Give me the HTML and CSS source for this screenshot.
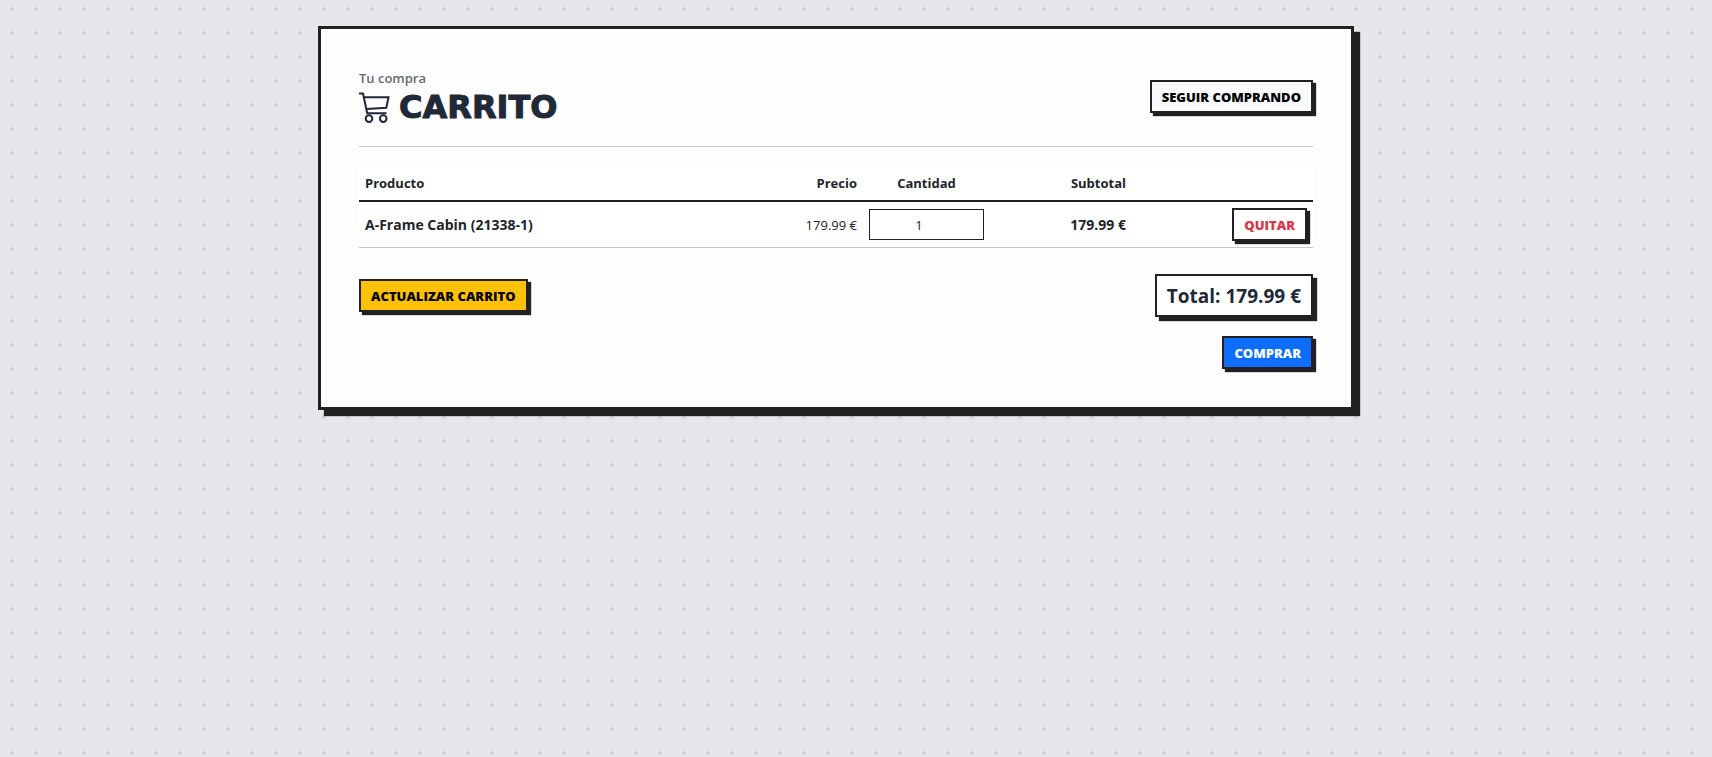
FILE: index.html
```html
<!DOCTYPE html>
<html lang="es">
<head>
<meta charset="utf-8">
<meta name="viewport" content="width=device-width, initial-scale=1">
<title>Carrito</title>
<link rel="stylesheet" href="styles.css">
</head>
<body class="page">
<main class="card">
  <header class="card-header">
    <div>
      <p class="eyebrow">Tu compra</p>
      <h1 class="title">
        <svg class="title-icon" viewBox="0 0 32 32" aria-hidden="true"><path d="M0 1.5H4L8.2 21.3H27.5M5 5.2H29.5L27.3 15.8L7.5 17"/><circle cx="10" cy="26.6" r="3.3"/><circle cx="24.2" cy="26.6" r="3.3"/></svg>
        <span>CARRITO</span>
      </h1>
    </div>
    <a class="button button-light" href="#productos">SEGUIR COMPRANDO</a>
  </header>
  <form class="cart">
    <table class="cart-table">
      <thead>
        <tr>
          <th class="col-product" scope="col">Producto</th>
          <th class="col-price" scope="col">Precio</th>
          <th class="col-quantity" scope="col">Cantidad</th>
          <th class="col-subtotal" scope="col">Subtotal</th>
          <th class="col-actions"></th>
        </tr>
      </thead>
      <tbody>
        <tr>
          <td class="col-product strong">A-Frame Cabin (21338-1)</td>
          <td class="col-price">179.99 €</td>
          <td class="col-quantity"><input class="quantity" type="number" min="1" value="1" aria-label="Cantidad"></td>
          <td class="col-subtotal strong">179.99 €</td>
          <td class="col-actions"><button class="button button-remove" type="button">QUITAR</button></td>
        </tr>
      </tbody>
    </table>
    <div class="summary">
      <button class="button button-update" type="submit">ACTUALIZAR CARRITO</button>
      <div class="total">Total: 179.99 €</div>
    </div>
    <div class="checkout">
      <button class="button button-buy" type="button">COMPRAR</button>
    </div>
  </form>
</main>
</body>
</html>
```
FILE: styles.css
```css
* {
  box-sizing: border-box;
}

.page {
  margin: 0;
  padding: 26px 40px 26px 0;
  min-height: 100vh;
  color: #212529;
  background: radial-gradient(circle, #d1d3d8 2px, transparent 2px) 0 -3px / 24px 24px #e5e7eb;
  font: 13px/20px "Open Sans", "Noto Sans", sans-serif;
}

.card {
  max-width: 1036px;
  margin: 0 auto;
  padding: 38px;
  border: 3px solid #212121;
  background: rgba(255, 255, 255, 0.92);
  box-shadow: 6px 6px 1px #212121;
}

.card-header {
  display: flex;
  align-items: center;
  justify-content: space-between;
  padding-bottom: 20px;
  border-bottom: 1px solid #c6c7c8;
}

.eyebrow {
  margin: 0;
  color: #666a6f;
  font-weight: 600;
  line-height: 22px;
}

.title {
  display: flex;
  align-items: center;
  gap: 8px;
  margin: 0;
  color: #1f2937;
  font: bold 32px/37px "DejaVu Sans", sans-serif;
  -webkit-text-stroke: 1px #1f2937;
}

.title-icon {
  width: 32px;
  height: 32px;
  fill: none;
  stroke: #1f2937;
  stroke-width: 2;
}

.button {
  display: inline-block;
  padding: 5px 10px 4px;
  border: 2px solid #212121;
  box-shadow: 3px 3px 1px #212121;
  color: #000;
  font: 800 13px/20px "Open Sans", "Noto Sans", sans-serif;
  text-decoration: none;
  white-space: nowrap;
}

.button-light {
  background: #f8fafc;
}

.button-remove {
  background: #fff;
  color: #dc3545;
}

.button-update {
  background: #ffc107;
}

.button-buy {
  background: #0d6efd;
  color: #fff;
}

.cart-table {
  width: 100%;
  margin-top: 18px;
  border-collapse: separate;
  border-spacing: 0;
  table-layout: fixed;
  background: #fff;
}

.cart-table th {
  padding: 8px 6px 7px;
  border-bottom: 2px solid #212121;
}

.cart-table td {
  padding: 6px;
  border-bottom: 1px solid #c6c7c8;
}

.cart-table .col-product {
  text-align: left;
}

.cart-table .col-price {
  width: 140px;
  text-align: right;
}

.cart-table .col-quantity {
  width: 127px;
  text-align: center;
}

.cart-table .col-subtotal {
  width: 142px;
  text-align: right;
}

.cart-table .col-actions {
  width: 181px;
  text-align: right;
}

.cart-table .strong {
  font-size: 14px;
  font-weight: 700;
}

.quantity {
  display: block;
  width: 100%;
  height: 31px;
  padding: 4px 8px;
  border: 1px solid #212121;
  background: #fff;
  color: #212529;
  font: inherit;
  text-align: center;
}

.summary {
  display: flex;
  align-items: center;
  justify-content: space-between;
  margin-top: 26px;
}

.total {
  padding: 9px 10px 7px;
  border: 2px solid #212121;
  background: #fff;
  box-shadow: 4px 4px 1px #212121;
  color: #1f2937;
  font-size: 19px;
  font-weight: 700;
  line-height: 23px;
}

.checkout {
  display: flex;
  justify-content: flex-end;
  margin-top: 19px;
}
```
